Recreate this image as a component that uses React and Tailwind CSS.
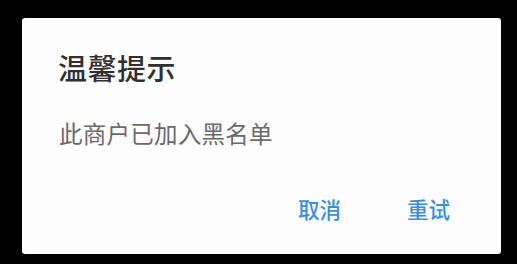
export default function App() {
  const font = { fontFamily: '"Noto Sans CJK SC", "Noto Sans", sans-serif' }
  return (
    <div className="w-[517px] h-[264px] bg-black pt-[18px] pl-[22px]" style={font}>
      <div className="w-[479px] h-[236px] bg-[#fdfdfd] rounded-[3px] flex flex-col">
        <h1 className="mt-[35px] ml-[36px] text-[29px] leading-[29px] font-medium text-[#303030] tracking-[0.5px]">
          温馨提示
        </h1>
        <p className="mt-[39px] ml-[37px] text-[23.5px] leading-[24px] text-[#6a6a6a] tracking-[0.25px]">
          此商户已加入黑名单
        </p>
        <div className="mt-auto mb-[35px] mr-[51px] flex justify-end gap-[66px] text-[21.5px] leading-[21px] font-medium text-[#3a8fdc]">
          <button>取消</button>
          <button>重试</button>
        </div>
      </div>
    </div>
  )
}
